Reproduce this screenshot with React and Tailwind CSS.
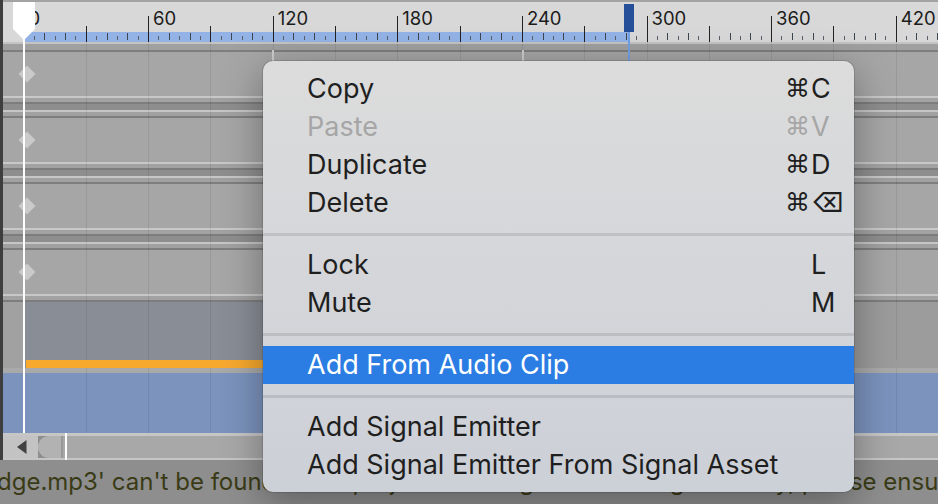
import React from "react";

const X0 = 23.5;
const MAJ = 124.6;

function Ruler() {
  const ticks = [];
  for (let i = 0; i <= 100; i++) {
    const x = Math.round(X0 + (i * MAJ) / 12) + 0.5;
    if (x > 940) break;
    const m = i % 12;
    let y1;
    let y2 = 42;
    let c = "#222222";
    if (m === 0) y1 = 16;
    else if (m === 6) y1 = 26;
    else if (m % 2 === 0) {
      y1 = 33;
      y2 = 40;
      c = "#3f4650";
    } else {
      y1 = 36;
      y2 = 40;
      c = "#59606a";
    }
    ticks.push(<line key={i} x1={x} x2={x} y1={y1} y2={y2} stroke={c} strokeWidth="1" />);
  }
  const labels = [0, 60, 120, 180, 240, 300, 360, 420];
  return (
    <div className="relative h-[40px] bg-[#d8d8d8] overflow-hidden">
      <svg className="absolute left-0 top-0" width="935" height="40" viewBox="3 2 935 40">
        <rect x="25" y="32" width="603" height="10" fill="#93b3e7" />
        {ticks}
      </svg>
      {labels.map((v, k) => (
        <span
          key={v}
          className="absolute top-[7px] text-[18.5px] leading-[18px] text-[#1c1c1c] font-['Inter',sans-serif]"
          style={{ left: X0 + k * MAJ + 5 - 3 }}
        >
          {v}
        </span>
      ))}
    </div>
  );
}

function TrackSep() {
  return (
    <div className="flex flex-col">
      <div className="h-[2px] bg-[#c8c8c8]" />
      <div className="h-[4px] bg-[#a2a2a2]" />
      <div className="h-[2px] bg-[#7d7d7d]" />
      <div className="h-[6px] bg-[#8e8e8e]" />
      <div className="h-[2px] bg-[#c6c6c6]" />
      <div className="h-[4px] bg-[#a1a1a1]" />
      <div className="h-[2px] bg-[#7e7e7e]" />
    </div>
  );
}

function Track() {
  return (
    <div className="h-[44px] bg-[#a6a6a6] flex items-center">
      <div className="ml-[18px] w-[12px] h-[12px] rotate-45 bg-[#cacaca] blur-[0.4px]" />
    </div>
  );
}

function Item({ label, mod, k, disabled, active }) {
  return (
    <div
      className={
        "h-[38px] flex items-center pl-[44px] text-[27px] leading-[38px] " +
        (active ? "bg-[#2b7de3] text-white" : disabled ? "text-[#a6a6a6]" : "text-[#1f1f1f]")
      }
    >
      <span className="w-[478px] whitespace-nowrap">{label}</span>
      <span className="w-[26px] font-['DejaVu_Sans',sans-serif] text-[25px]">{mod}</span>
      <span className="whitespace-nowrap">{k}</span>
    </div>
  );
}

function Sep() {
  return (
    <div className="h-[24px] flex items-center">
      <div className="h-[3px] w-full bg-black/10" />
    </div>
  );
}

export default function App() {
  const grid = [];
  for (let k = 1; k <= 15; k++) {
    const x = Math.round(X0 + k * (MAJ / 2)) + 0.5;
    grid.push(<line key={"a" + k} x1={x} x2={x} y1={42} y2={360} stroke="rgba(0,0,0,0.075)" />);
    grid.push(<line key={"b" + k} x1={x} x2={x} y1={368} y2={433} stroke="rgba(0,0,0,0.075)" />);
  }
  return (
    <div className="relative w-[938px] h-[504px] overflow-hidden bg-[#8e8e8e] font-['Inter',sans-serif]">
      <div className="flex h-[460px]">
        <div className="w-[3px] bg-[#3e3e3e]" />
        <div className="flex-1 flex flex-col">
          <div className="h-[2px] bg-[#a3a3a3]" />
          <Ruler />
          <div className="h-[2px] bg-[#c4c4c4]" />
          <div className="h-[6px] bg-[#a0a0a0]" />
          <div className="h-[2px] bg-[#7e7e7e]" />
          <Track />
          <TrackSep />
          <Track />
          <TrackSep />
          <Track />
          <TrackSep />
          <Track />
          <div className="h-[2px] bg-[#c8c8c8]" />
          <div className="h-[4px] bg-[#a2a2a2]" />
          <div className="h-[2px] bg-[#7d7d7d]" />
          <div className="flex h-[66px]">
            <div className="w-[22px] bg-[#a1a1a1]" />
            <div className="w-[603px] flex flex-col">
              <div className="h-[58px] bg-[#898d95]" />
              <div className="h-[8px] ml-[1px] bg-[#f7a92e]" />
            </div>
            <div className="flex-1 bg-[#9c9c9c]" />
          </div>
          <div className="h-[5px] bg-[#a9a9a9]" />
          <div className="h-[60px] bg-[#7b93bd]" />
          <div className="h-[3px] bg-[#c6c6c6]" />
          <div className="h-[22px] flex">
            <div className="w-[35px] bg-[#c3c3c3] flex items-center pl-[14px]">
              <svg width="10" height="14" viewBox="0 0 10 14">
                <polygon points="9.5,0 9.5,14 0,7" fill="#414141" />
              </svg>
            </div>
            <div className="w-[25px] rounded-l-full bg-[#b2b2b2] border-r-[2px] border-[#989898]" />
            <div className="flex-1 bg-[#a8a8a8]" />
          </div>
          <div className="h-[2px] bg-[#c6c6c6]" />
        </div>
      </div>
      <div className="h-[44px] bg-[#8e8e8e] overflow-hidden">
        <p className="ml-[-3px] whitespace-nowrap text-[24px] leading-[44px] text-[#3a3b16]">
          dge.mp3' can't be found in the project. Reassign the missing file early, please ensure it exists.
        </p>
      </div>

      <svg className="absolute left-0 top-0 pointer-events-none" width="938" height="460" viewBox="0 0 938 460">
        {grid}
        <rect x="272" y="50" width="2" height="12" fill="#cdcdcd" />
        <rect x="522" y="50" width="2" height="12" fill="#cdcdcd" />
        <rect x="628" y="32" width="2" height="30" fill="#72a0e6" />
        <rect x="624" y="4" width="10" height="28" fill="#264f99" />
        <polygon points="13,2 35,2 35,29 24,40 13,29" fill="#ffffff" />
        <rect x="23" y="30" width="2" height="403" fill="#ffffff" />
        <rect x="65" y="433" width="2" height="27" fill="#ffffff" />
      </svg>

      <div className="absolute left-[263px] top-[61px] w-[591px] h-[431px] rounded-[10px] overflow-hidden bg-linear-to-b from-[#dcdcdc] to-[#ccd0d7] pt-[9px] shadow-[0_10px_40px_rgba(0,0,0,0.35),0_0_0_1px_rgba(0,0,0,0.12)]">
        <Item label="Copy" mod="⌘" k="C" />
        <Item label="Paste" mod="⌘" k="V" disabled />
        <Item label="Duplicate" mod="⌘" k="D" />
        <Item label="Delete" mod="⌘" k="⌫" />
        <Sep />
        <Item label="Lock" k="L" />
        <Item label="Mute" k="M" />
        <Sep />
        <Item label="Add From Audio Clip" active />
        <Sep />
        <Item label="Add Signal Emitter" />
        <Item label="Add Signal Emitter From Signal Asset" />
      </div>
    </div>
  );
}
